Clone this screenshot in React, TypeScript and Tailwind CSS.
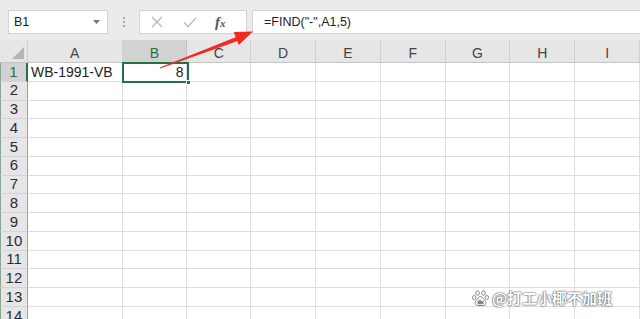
const cols = [
  { name: "A", w: 95 },
  { name: "B", w: 65 },
  { name: "C", w: 64 },
  { name: "D", w: 65 },
  { name: "E", w: 65 },
  { name: "F", w: 65 },
  { name: "G", w: 65 },
  { name: "H", w: 65 },
  { name: "I", w: 65 },
];

const rows = Array.from({ length: 14 }, (_, i) => i + 1);

function Paw() {
  return (
    <svg width="17" height="17" viewBox="0 0 17 17">
      <g fill="#fff" stroke="#8a8a8a" strokeWidth="1">
        <ellipse cx="5.5" cy="3" rx="1.8" ry="2.2" />
        <ellipse cx="11.5" cy="3" rx="1.8" ry="2.2" />
        <ellipse cx="2.2" cy="7.5" rx="1.7" ry="2" />
        <ellipse cx="14.8" cy="7.5" rx="1.7" ry="2" />
        <path d="M8.5 6.5c-2 0-3 2.5-4.5 4.2C2.6 12.2 2.8 15.5 5.5 15.5h6c2.7 0 2.9-3.3 1.5-4.8C11.5 9 10.5 6.5 8.5 6.5z" />
      </g>
      <text x="8.5" y="14" fontSize="4.5" textAnchor="middle" fill="#8a8a8a" fontFamily="Liberation Sans, sans-serif">
        du
      </text>
    </svg>
  );
}

export default function App() {
  return (
    <div className="relative w-[640px] h-[319px] overflow-hidden bg-white font-['Liberation_Sans',Arial,sans-serif] text-[#222]">
      {/* toolbar */}
      <div className="flex items-start h-[40px] bg-[#ebebeb] pt-[10px] pl-[8px]">
        <div className="flex items-center justify-between w-[100px] h-[24px] bg-white border border-[#d4d4d4] pl-[5px] pr-[7px] text-[12.5px]">
          <span>B1</span>
          <svg width="7" height="4" viewBox="0 0 7 4">
            <path d="M0 0h7L3.5 4z" fill="#777" />
          </svg>
        </div>
        <div className="flex flex-col gap-[2px] items-center justify-center w-[31px] h-[24px]">
          <div className="w-[2px] h-[2px] bg-[#a8a8a8]" />
          <div className="w-[2px] h-[2px] bg-[#a8a8a8]" />
          <div className="w-[2px] h-[2px] bg-[#a8a8a8]" />
        </div>
        <div className="flex items-center w-[108px] h-[24px] bg-white border border-[#d4d4d4]">
          <svg className="ml-[11px]" width="12" height="12" viewBox="0 0 12 12">
            <path d="M1 1l10 10M11 1L1 11" stroke="#b8b8b8" strokeWidth="1.3" />
          </svg>
          <svg className="ml-[20px]" width="14" height="11" viewBox="0 0 14 11">
            <path d="M1 5.5l4 4L13 1" stroke="#b8b8b8" strokeWidth="1.3" fill="none" />
          </svg>
          <span className="ml-[18px] font-['Liberation_Serif',serif] italic font-bold text-[15px] text-[#555]">
            f<span className="text-[11px]">x</span>
          </span>
        </div>
        <div className="flex items-center flex-1 h-[24px] bg-white border border-[#d4d4d4] border-r-0 ml-[5px] pl-[11px] text-[12.5px]">
          =FIND("-",A1,5)
        </div>
      </div>

      {/* column headers */}
      <div className="flex h-[23px] bg-[#e6e6e6] border-b border-[#c4c4c4] text-[14px] leading-none text-[#444]">
        <div className="relative w-[28px] border-r border-[#d0d0d0]">
          <svg className="absolute right-[3px] bottom-[3px]" width="12" height="12" viewBox="0 0 12 12">
            <path d="M12 0v12H0z" fill="#b4b4b4" />
          </svg>
        </div>
        {cols.map((c) => (
          <div
            key={c.name}
            style={{ width: c.w }}
            className={
              c.name === "B"
                ? "flex items-end justify-center pb-[2px] bg-[#d2d2d2] text-[#217346] border-r border-[#c0c0c0]"
                : "flex items-end justify-center pb-[2px] border-r border-[#d0d0d0]"
            }
          >
            {c.name}
          </div>
        ))}
      </div>

      {/* rows */}
      {rows.map((r) => (
        <div key={r} className="flex h-[18.77px] text-[14px]">
          <div
            className={
              r === 1
                ? "w-[28px] flex items-center justify-center bg-[#d2d2d2] text-[#217346] text-[15px] border-l border-l-[#8aa595] border-r-2 border-[#217346] border-b border-b-[#d4d4d4]"
                : "w-[28px] flex items-center justify-center bg-[#e6e6e6] text-[#2a2a3a] text-[15px] border-l border-l-[#8aa595] border-r border-[#9f9f9f] border-b border-b-[#d4d4d4]"
            }
          >
            {r}
          </div>
          {cols.map((c) => (
            <div
              key={c.name}
              style={{ width: c.w }}
              className="flex items-center border-r border-b border-[#dedede] leading-none"
            >
              {r === 1 && c.name === "A" && <span className="pl-[3px]">WB-1991-VB</span>}
              {r === 1 && c.name === "B" && <span className="ml-auto pr-[3px]">8</span>}
            </div>
          ))}
        </div>
      ))}

      {/* selected cell B1 */}
      <div className="absolute left-[122px] top-[62px] w-[67px] h-[21px] border-2 border-[#217346]">
        <div className="absolute -right-[4px] -bottom-[4px] w-[5px] h-[5px] bg-[#217346] border border-white" />
      </div>

      {/* annotation arrow */}
      <svg className="absolute left-0 top-0" width="640" height="319" viewBox="0 0 640 319">
        <polygon points="159.8,67.5 160.2,68.5 238.9,40.4 237.5,36.6" fill="#f42a22" />
        <polygon points="253,31.5 233.7,32 238.7,45" fill="#f42a22" />
      </svg>

      {/* watermark */}
      <div className="absolute left-[472px] top-[287px] flex items-center gap-[3px] text-[15px] font-bold text-white [text-shadow:0_0_2px_#444,0_0_1px_#444] font-['Noto_Sans_CJK_SC',sans-serif]">
        <Paw />
        <span>@打工小椰不加班</span>
      </div>
    </div>
  );
}
